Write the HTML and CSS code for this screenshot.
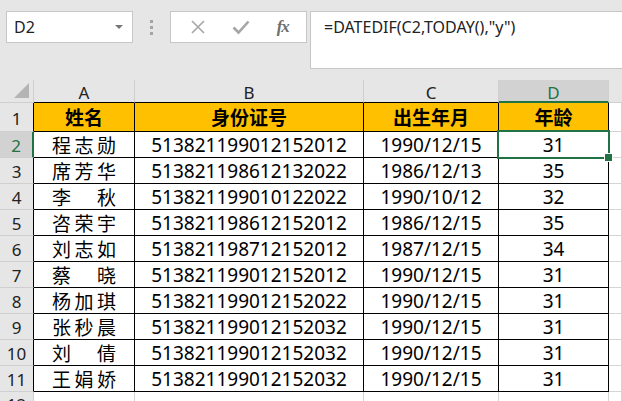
FILE: index.html
```html
<!DOCTYPE html>
<html>
<head>
<meta charset="utf-8">
<link rel="stylesheet" href="styles.css">
</head>
<body>
<div class="app">
  <div class="toolbar">
    <div class="namebox"><span class="nb-text">D2</span><span class="caret"></span></div>
    <div class="sep"><i></i><i></i><i></i></div>
    <div class="btnbox">
      <svg class="ico" width="16" height="16" viewBox="0 0 16 16"><path d="M2 2 L14 14 M14 2 L2 14" stroke="#a6a6a6" stroke-width="1.6" fill="none"/></svg>
      <svg class="ico" width="18" height="16" viewBox="0 0 18 16"><path d="M1.5 8.5 L6.5 13.5 L16.5 2.5" stroke="#a6a6a6" stroke-width="2.6" fill="none"/></svg>
      <span class="fx">fx</span>
    </div>
    <div class="formula">=DATEDIF(C2,TODAY(),"y")</div>
  </div>
  <div class="sheet">
    <div class="corner"><span class="tri"></span></div>
    <div class="ch">A</div><div class="ch">B</div><div class="ch">C</div><div class="ch sel">D</div><div class="ch last"></div>

    <div class="rh tb">1</div>
    <div class="c hd">姓名</div><div class="c hd">身份证号</div><div class="c hd">出生年月</div><div class="c hd">年龄</div><div class="e"></div>

    <div class="rh tb sel">2</div>
    <div class="c nm"><span>程</span><span>志</span><span>勋</span></div><div class="c">513821199012152012</div><div class="c">1990/12/15</div><div class="c cur">31</div><div class="e"></div>

    <div class="rh tb">3</div>
    <div class="c nm"><span>席</span><span>芳</span><span>华</span></div><div class="c">513821198612132022</div><div class="c">1986/12/13</div><div class="c">35</div><div class="e"></div>

    <div class="rh tb">4</div>
    <div class="c nm"><span>李</span><span>秋</span></div><div class="c">513821199010122022</div><div class="c">1990/10/12</div><div class="c">32</div><div class="e"></div>

    <div class="rh tb">5</div>
    <div class="c nm"><span>咨</span><span>荣</span><span>宇</span></div><div class="c">513821198612152012</div><div class="c">1986/12/15</div><div class="c">35</div><div class="e"></div>

    <div class="rh tb">6</div>
    <div class="c nm"><span>刘</span><span>志</span><span>如</span></div><div class="c">513821198712152012</div><div class="c">1987/12/15</div><div class="c">34</div><div class="e"></div>

    <div class="rh tb">7</div>
    <div class="c nm"><span>蔡</span><span>晓</span></div><div class="c">513821199012152012</div><div class="c">1990/12/15</div><div class="c">31</div><div class="e"></div>

    <div class="rh tb">8</div>
    <div class="c nm"><span>杨</span><span>加</span><span>琪</span></div><div class="c">513821199012152022</div><div class="c">1990/12/15</div><div class="c">31</div><div class="e"></div>

    <div class="rh tb">9</div>
    <div class="c nm"><span>张</span><span>秒</span><span>晨</span></div><div class="c">513821199012152032</div><div class="c">1990/12/15</div><div class="c">31</div><div class="e"></div>

    <div class="rh tb">10</div>
    <div class="c nm"><span>刘</span><span>倩</span></div><div class="c">513821199012152032</div><div class="c">1990/12/15</div><div class="c">31</div><div class="e"></div>

    <div class="rh tb">11</div>
    <div class="c nm"><span>王</span><span>娟</span><span>娇</span></div><div class="c">513821199012152032</div><div class="c">1990/12/15</div><div class="c">31</div><div class="e"></div>

    <div class="rh last">12</div>
    <div class="e"></div><div class="e"></div><div class="e"></div><div class="e"></div><div class="e"></div>
  </div>
</div>
</body>
</html>
```
FILE: styles.css
```css
* { box-sizing: border-box; margin: 0; padding: 0; }
html, body { width: 622px; height: 401px; overflow: hidden; background: #e6e6e6; }
body { font-family: "Noto Sans", "Noto Sans CJK SC", sans-serif; }
.app { width: 622px; height: 401px; overflow: hidden; }

.toolbar { height: 80px; display: flex; align-items: flex-start; padding: 11px 0 0 6px; }
.namebox { width: 127px; height: 32px; background: #fff; border: 1px solid #c6c6c6; display: flex; align-items: center; justify-content: space-between; padding: 0 7px 0 7px; }
.nb-text { font-size: 16px; color: #222; }
.caret { width: 0; height: 0; border-left: 4px solid transparent; border-right: 4px solid transparent; border-top: 4px solid #777; margin-right: 2px; }
.sep { width: 37px; height: 32px; display: flex; flex-direction: column; align-items: center; justify-content: center; gap: 3px; }
.sep i { display: block; width: 3px; height: 3px; background: #a5a5a5; }
.btnbox { width: 137px; height: 32px; background: #fff; border: 1px solid #c6c6c6; display: flex; align-items: center; justify-content: space-around; padding: 0 4px 0 6px; }
.ico { display: block; }
.fx { font-family: "Liberation Serif", serif; font-style: italic; font-weight: bold; font-size: 17px; color: #6e6e6e; letter-spacing: -1px; }
.formula { flex: 1; margin-left: 3px; height: 58px; background: #fff; border: 1px solid #c6c6c6; border-right: none; padding: 4px 0 0 13px; font-size: 16px; color: #222; }

.sheet { display: grid; grid-template-columns: 34px 101px 229px 135px 110px 13px; grid-template-rows: 23px 29px repeat(11, 26px); }
.corner { background: #e6e6e6; border-right: 1px solid #cfcfcf; border-bottom: 1px solid #cfcfcf; position: relative; }
.tri { position: absolute; right: 4px; bottom: 4px; width: 0; height: 0; border-left: 15px solid transparent; border-bottom: 15px solid #b4b4b4; }
.ch { background: #e6e6e6; border-right: 1px solid #cfcfcf; border-bottom: 1px solid #000; font-size: 17px; color: #222; display: flex; align-items: center; justify-content: center; padding-top: 3px; }
.ch.sel { background: #d2d2d2; color: #217346; border-bottom: 2px solid #217346; }
.ch.last { border-right: none; border-bottom: 1px solid #cfcfcf; }
.rh { background: #e6e6e6; border-bottom: 1px solid #cfcfcf; border-right: 1px solid #cfcfcf; font-size: 17px; color: #222; display: flex; align-items: center; justify-content: center; padding-top: 2px; }
.rh.tb { border-right: 1px solid #000; }
.rh.sel { background: #d2d2d2; color: #217346; border-right: 2px solid #217346; }
.rh.last { align-items: flex-start; padding-top: 1px; }
.c { background: #fff; border-right: 1px solid #000; border-bottom: 1px solid #000; font-size: 19px; color: #000; display: flex; align-items: center; justify-content: center; white-space: nowrap; }
.c.hd { background: #ffc000; font-weight: bold; font-size: 19px; }
.c.nm { justify-content: space-between; padding: 0 18px 0 18px; }
.e { background: #fff; border-right: 1px solid #d4d4d4; border-bottom: 1px solid #d4d4d4; }
.cur { position: relative; }
.cur::before { content: ""; position: absolute; left: -2px; top: -2px; right: -2px; bottom: -2px; border: 2px solid #217346; }
.cur::after { content: ""; position: absolute; right: -5px; bottom: -5px; width: 7px; height: 7px; background: #217346; border: 1px solid #fff; }
```
